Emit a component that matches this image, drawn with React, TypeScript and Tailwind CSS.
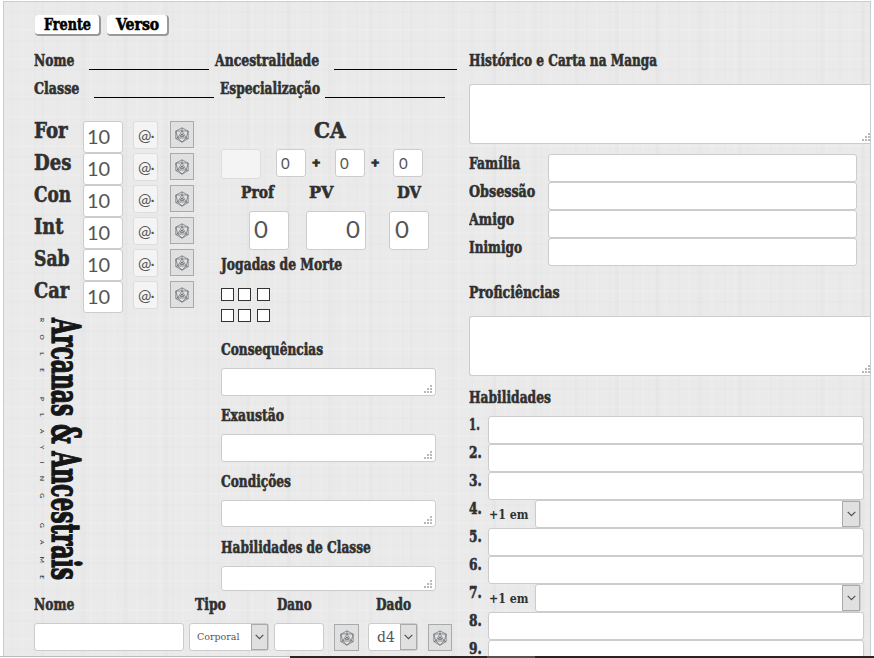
import { useLayoutEffect, useRef, useState } from "react";
import type { ReactNode } from "react";

type LabelProps = { children: string; width: number; className?: string };

// Condensed display lettering: the text is squeezed to the given width.
function Label({ children, width, className = "text-base leading-[22px]" }: LabelProps) {
  const ref = useRef<HTMLSpanElement>(null);
  const [scale, setScale] = useState(1);
  useLayoutEffect(() => {
    if (ref.current) setScale(width / ref.current.offsetWidth);
  }, [width]);
  return (
    <span className="block shrink-0" style={{ width }}>
      <span
        ref={ref}
        className={`inline-block origin-left align-top font-['DejaVu_Serif',serif] font-bold whitespace-nowrap text-[#303030] [-webkit-text-stroke:0.6px] ${className}`}
        style={{ transform: `scaleX(${scale})` }}
      >
        {children}
      </span>
    </span>
  );
}

function Box({ className, children }: { className: string; children?: ReactNode }) {
  return (
    <div className={`flex shrink-0 items-center rounded-[3px] border border-[#ccc] bg-white font-[Lato,sans-serif] text-[#555] ${className}`}>
      {children}
    </div>
  );
}

function Die({ className }: { className: string }) {
  return (
    <div className={`flex shrink-0 items-center justify-center border border-[#aaa] bg-[#e0e0e0] ${className}`}>
      <svg width="16" height="16" viewBox="0 0 16 16" fill="none" stroke="#5f646b" strokeWidth="0.65">
        <path d="M8 .8 14.2 4.2v7.4L8 15.2 1.8 11.6V4.2Z" />
        <path d="M8 .8v3L3.8 11h8.4L8 3.8M1.8 4.2 8 3.8l6.2.4L12.2 11l2 .6M1.8 4.2l2 6.8-2 .6M3.8 11 8 15.2l4.2-4.2" />
        <path d="M6.2 9.3 8 6.8l1.8 2.5Z" strokeWidth="0.9" />
      </svg>
    </div>
  );
}

function Grip({ className = "mr-[3px]" }: { className?: string }) {
  return (
    <svg className={`mb-[2px] ml-auto shrink-0 self-end ${className}`} width="8" height="8" fill="#b9b9b9">
      <path d="M6 0h2v2H6zM3 3h2v2H3zM6 3h2v2H6zM0 6h2v2H0zM3 6h2v2H3zM6 6h2v2H6z" />
    </svg>
  );
}

function Arrow({ className = "w-[17px]" }: { className?: string }) {
  return (
    <span className={`ml-auto flex shrink-0 items-center justify-center self-stretch border border-[#aaa] bg-[#e0e0e0] ${className}`}>
      <svg width="9" height="6" fill="none" stroke="#505050" strokeWidth="1.2">
        <path d="m.7.8 3.8 3.8L8.3.8" />
      </svg>
    </span>
  );
}

const attributes: [string, number][] = [["For", 34], ["Des", 37], ["Con", 37], ["Int", 29], ["Sab", 36], ["Car", 35]];
const notes: [string, number, string][] = [
  ["Consequências", 102, "h-7"],
  ["Exaustão", 63, "h-7"],
  ["Condições", 70, "h-[27px]"],
  ["Habilidades de Classe", 150, "h-[25px]"],
];
const bonds: [string, number][] = [["Família", 51], ["Obsessão", 66], ["Amigo", 45], ["Inimigo", 53]];

function Logo() {
  return (
    <svg className="ml-1 block overflow-visible" width="46" height="266" viewBox="0 0 46 266">
      <g fill="#161616" fontFamily="'DejaVu Serif', serif">
        <text transform="translate(13.5 1) rotate(90)" fontSize="40" fontWeight="bold" stroke="#161616" strokeWidth="1.4" textLength="262" lengthAdjust="spacingAndGlyphs">
          Arcanas &amp; Ancestrais
        </text>
        <g fontFamily="Lato, sans-serif" fontSize="6.5">
          <text transform="translate(2 1) rotate(90)" textLength="54">ROLE</text>
          <text transform="translate(2 80) rotate(90)" textLength="101">PLAYING</text>
          <text transform="translate(2 206) rotate(90)" textLength="56">GAME</text>
        </g>
      </g>
    </svg>
  );
}

function LeftSide() {
  return (
    <section className="w-[435px] shrink-0">
      <div className="flex gap-1.5 pl-px">
        <div className="flex h-[21px] w-[66px] justify-center rounded border-r-2 border-b-2 border-[#999] bg-white">
          <Label width={47} className="text-base leading-[20px] text-black!">Frente</Label>
        </div>
        <div className="flex h-[21px] w-[62px] justify-center rounded border-r-2 border-b-2 border-[#999] bg-white">
          <Label width={43} className="text-base leading-[20px] text-black!">Verso</Label>
        </div>
      </div>
      <div className="mt-[14px] flex h-5">
        <Label width={40}>Nome</Label>
        <div className="mr-1.5 ml-[15px] w-[120px] border-b border-black" />
        <Label width={104}>Ancestralidade</Label>
        <div className="ml-[15px] w-[123px] border-b border-black" />
      </div>
      <div className="mt-2 flex h-5">
        <Label width={45}>Classe</Label>
        <div className="mr-1.5 ml-[15px] w-[120px] border-b border-black" />
        <Label width={100}>Especialização</Label>
        <div className="ml-[5px] w-[120px] border-b border-black" />
      </div>

      <div className="flex h-[498px] pt-[23px]">
        <div className="w-[187px] shrink-0">
          {attributes.map(([name, w]) => (
            <div key={name} className="flex h-8">
              <div className="-mt-1 w-[49px]">
                <Label width={w} className="text-[22px] leading-[26px]">{name}</Label>
              </div>
              <Box className="h-8 w-10 pb-[3px] pl-[3px] text-xl">10</Box>
              <Box className="ml-[10px] h-7 w-[25px] border-[#ddd] bg-[#f4f4f4]! pl-1 text-base tracking-[-1px]">
                @·
              </Box>
              <Die className="ml-3 h-[27px] w-6" />
            </div>
          ))}
          <div className="pt-1">
            <Logo />
          </div>
        </div>

        <div className="w-[215px] shrink-0">
          <div className="-mt-1 flex h-8 pl-[93px]">
            <Label width={32} className="text-[22px] leading-[26px]">CA</Label>
          </div>
          <div className="flex h-[34px]">
            <Box className="h-[30px] w-10 border-[#ddd] bg-[#f4f4f4]!" />
            <Box className="ml-[15px] h-7 w-[30px] pl-1 text-[15px]">0</Box>
            <div className="mt-1 ml-1.5"><Label width={8} className="text-[10px] leading-5 [-webkit-text-stroke:1.4px]!">+</Label></div>
            <Box className="ml-[15px] h-7 w-[30px] pl-1 text-[15px]">0</Box>
            <div className="mt-1 ml-1.5"><Label width={8} className="text-[10px] leading-5 [-webkit-text-stroke:1.4px]!">+</Label></div>
            <Box className="ml-[14px] h-7 w-[30px] pl-[5px] text-[15px]">0</Box>
          </div>
          <div className="-mt-px flex h-[29px] pl-5">
            <Label width={33}>Prof</Label>
            <div className="ml-[35px]"><Label width={24}>PV</Label></div>
            <div className="ml-16"><Label width={24}>DV</Label></div>
          </div>
          <div className="flex h-[43px] pl-7">
            <Box className="h-[39px] w-10 pb-[3px] pl-1 text-2xl">0</Box>
            <Box className="ml-[17px] h-[39px] w-[60px] justify-end pr-[5px] pb-[3px] text-2xl">0</Box>
            <Box className="ml-[23px] h-[39px] w-10 pb-[3px] pl-[5px] text-2xl">0</Box>
          </div>
          <div className="h-5"><Label width={121}>Jogadas de Morte</Label></div>
          {[0, 1].map((row) => (
            <div key={row} className={`flex h-[13px] ${row ? "mt-2" : "mt-[14px]"}`}>
              <i className="size-[13px] border border-[#333] bg-white" />
              <i className="ml-1 size-[13px] border border-[#333] bg-white" />
              <i className="ml-1.5 size-[13px] border border-[#333] bg-white" />
            </div>
          ))}
          <div className="mt-[17px]">
            {notes.map(([name, w, field]) => (
              <div key={name} className="h-[66px] last:h-[54px]">
                <div className="h-[29px]"><Label width={w}>{name}</Label></div>
                <Box className={`w-[215px] ${field}`}><Grip /></Box>
              </div>
            ))}
          </div>
        </div>
      </div>

      <div className="-mt-[2px] flex h-[29px]">
        <Label width={40}>Nome</Label>
        <div className="ml-[121px]"><Label width={31}>Tipo</Label></div>
        <div className="ml-[51px]"><Label width={35}>Dano</Label></div>
        <div className="ml-16"><Label width={35}>Dado</Label></div>
      </div>
      <div className="flex">
        <Box className="h-7 w-[150px]" />
        <Box className="ml-[5px] h-7 w-[80px] pl-[7px] font-['DejaVu_Serif',serif]! text-[9.5px]">Corporal<Arrow /></Box>
        <Box className="ml-[5px] h-7 w-[50px]" />
        <Die className="mt-px ml-[10px] h-[27px] w-[25px]" />
        <Box className="ml-[9px] h-7 w-[50px] pl-2 font-['DejaVu_Serif',serif]! text-sm">d4<Arrow /></Box>
        <Die className="mt-px ml-[10px] h-[27px] w-6" />
      </div>
    </section>
  );
}

function RightSide() {
  return (
    <section className="min-w-0 flex-1 overflow-hidden pt-[35px]">
      <div className="h-[34px]"><Label width={188}>Histórico e Carta na Manga</Label></div>
      <Box className="h-[60px] w-[401px] rounded-r-none border-r-0"><Grip className="mr-0" /></Box>
      <div className="mt-[10px]">
        {bonds.map(([name, w]) => (
          <div key={name} className="flex h-7">
            <div className="-mt-px w-[79px]"><Label width={w}>{name}</Label></div>
            <Box className="h-7 w-[309px]" />
          </div>
        ))}
      </div>
      <div className="mt-4 h-[34px]"><Label width={91}>Proficiências</Label></div>
      <Box className="h-[60px] w-[401px] rounded-r-none border-r-0"><Grip className="mr-0" /></Box>
      <div className="mt-[11px] h-[29px]"><Label width={82}>Habilidades</Label></div>
      {[1, 2, 3, 4, 5, 6, 7, 8, 9].map((n) => (
        <div key={n} className="flex h-7">
          <div className="-mt-px w-[19px]">
            <Label width={n === 1 ? 11 : 13} className="text-base leading-5">{`${n}.`}</Label>
          </div>
          {n === 4 || n === 7 ? (
            <>
              <div className="mt-1 ml-px w-[46px]">
                <Label width={40} className="text-[13px] leading-[22px] [-webkit-text-stroke:0]!">+1 em</Label>
              </div>
              <Box className="h-7 w-[326px]"><Arrow className="w-[18px]" /></Box>
            </>
          ) : (
            <Box className="h-7 w-[376px]" />
          )}
        </div>
      ))}
    </section>
  );
}

export default function App() {
  return (
    <div className="flex h-[658px] w-[874px] flex-col overflow-hidden bg-white">
      <div className="h-[656px] shrink-0 pt-px pl-[3px]">
        <main className="flex h-[655px] w-[868px] overflow-hidden border-x border-t border-[#ccc] bg-[#eaeaea] bg-[repeating-linear-gradient(90deg,#0000_0_7px,#00000002_7px_9px,#0000_9px_17px,#ffffff18_17px_19px,#0000_19px_23px),repeating-linear-gradient(0deg,#0000_0_5px,#00000002_5px_7px,#0000_7px_16px,#ffffff18_16px_18px,#0000_18px_29px),repeating-linear-gradient(90deg,#0000_0_37px,#00000003_37px_41px)] pt-[13px] pl-[30px]">
          <LeftSide />
          <RightSide />
        </main>
      </div>
      <div className="flex h-[2px] shrink-0">
        <div className="w-[290px] border-t border-[#bbb]" />
        <div className="w-[197px] bg-[#2d2325]" />
        <div className="w-12 bg-[#5b5153]" />
        <div className="flex-1 bg-[#2d2325]" />
      </div>
    </div>
  );
}
